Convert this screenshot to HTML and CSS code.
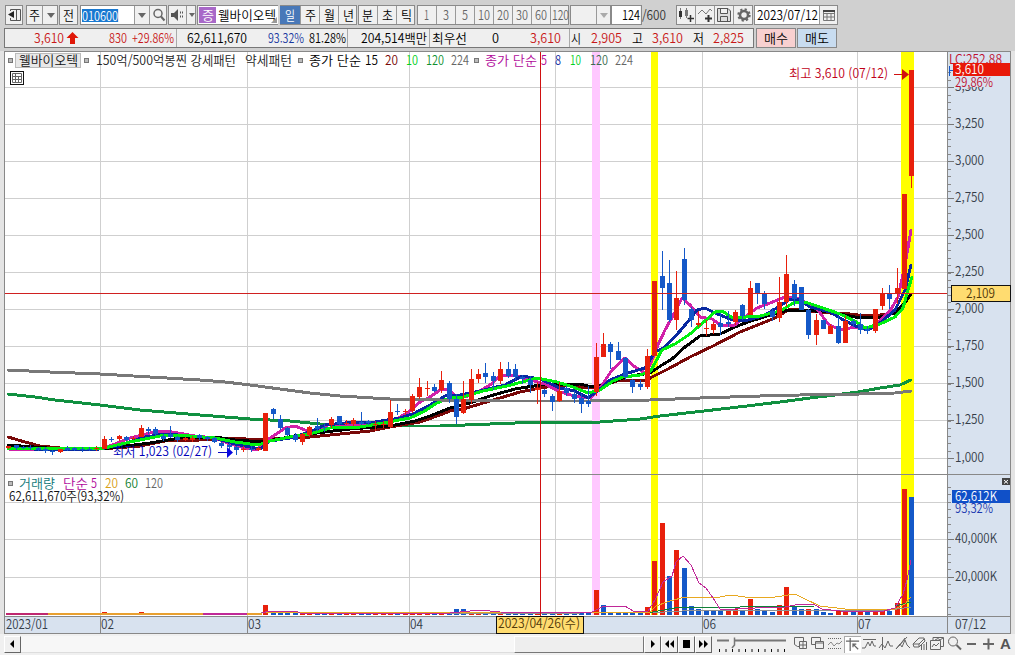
FILE: index.html
```html
<!DOCTYPE html>
<html lang="ko">
<head>
<meta charset="utf-8">
<title>웰바이오텍</title>
<link rel="stylesheet" href="styles.css">
</head>
<body>
<div class="app">
  <div class="toolbar">
    <div class="grp"><span class="btn w18"><svg width="16" height="16"><path d="M4.500 4V2.500H14.500V13.500H4.500V11M10.500 2.500V13.500" fill="none" stroke="#555"/><path d="M2 7.500L8 4V11Z" fill="#222"/></svg></span></div>
    <div class="grp g3"><span class="btn w16"><b class="fit" data-w="11">주</b></span><span class="btn w16"><i class="dn"></i></span></div>
    <div class="grp g1"><span class="btn w19"><b class="fit" data-w="11">전</b></span></div>
    <div class="grp g2"><span class="btn code"><b class="fit sel" data-w="36">010600</b></span><span class="btn w15"><i class="dn"></i></span><span class="btn w18"><svg width="14" height="14"><circle cx="6" cy="5.500" r="4" fill="none" stroke="#666" stroke-width="1.500"/><path d="M9 8.500L12.500 12.500" stroke="#666" stroke-width="2"/></svg></span></div>
    <div class="grp g1"><span class="btn w18"><svg width="15" height="14"><path d="M1 5H4L8 1V13L4 9H1Z" fill="#555"/><path d="M10 4.500H14M10 8.500H14" stroke="#555" stroke-dasharray="1 1" stroke-width="2"/></svg></span><span class="btn w10"><i class="dn small"></i></span></div>
    <div class="grp g1"><span class="btn name"><em><b class="fit" data-w="12">증</b></em><b class="fit" data-w="58">웰바이오텍</b><i class="corner"></i></span></div>
    <div class="grp g2"><span class="btn w20 on"><b class="fit" data-w="10">일</b></span><span class="btn w19"><b class="fit" data-w="11">주</b></span><span class="btn w19"><b class="fit" data-w="11">월</b></span><span class="btn w19"><b class="fit" data-w="11">년</b></span></div>
    <div class="grp g1"><span class="btn w19"><b class="fit" data-w="11">분</b></span><span class="btn w19"><b class="fit" data-w="11">초</b></span><span class="btn w19"><b class="fit" data-w="11">틱</b></span></div>
    <div class="grp g2 off"><span class="btn w19"><b class="fit" data-w="5">1</b></span><span class="btn w19"><b class="fit" data-w="6">3</b></span><span class="btn w19"><b class="fit" data-w="6">5</b></span><span class="btn w19"><b class="fit" data-w="12">10</b></span><span class="btn w19"><b class="fit" data-w="12">20</b></span><span class="btn w19"><b class="fit" data-w="12">30</b></span><span class="btn w19"><b class="fit" data-w="12">60</b></span><span class="btn w19"><b class="fit" data-w="17">120</b></span></div>
    <div class="grp g1 off"><span class="btn w26"></span><span class="btn w15"><i class="dn"></i></span></div>
    <div class="grp"><span class="btn count"><b class="fit" data-w="18">124</b></span></div>
    <span class="total"><b class="fit" data-w="24">/600</b></span>
    <div class="grp g11">
      <span class="btn w19"><svg width="17" height="16"><path d="M3.500 1V12M9.500 1V11" stroke="#777"/><path d="M2 4H5V10H2Z" fill="#333"/><path d="M8 3H11V9H8Z" fill="#777"/><path d="M13.500 8V15M10.500 11.500H17" stroke="#333" stroke-width="1.500"/></svg></span>
      <span class="btn w19"><svg width="17" height="16"><path d="M1 7L5 3L9 7L13 2L15 4" fill="none" stroke="#777"/><path d="M11.500 8V15M8 11.500H15" stroke="#333" stroke-width="2"/></svg></span>
      <span class="btn w19"><svg width="16" height="16"><path d="M1.500 1.500H12L14.500 4V14.500H1.500ZM4.500 1.500V6.500H11.500V1.500M4.500 14.500V9.500H11.500V14.500" fill="#ddd" stroke="#555"/></svg></span>
      <span class="btn w20"><svg width="16" height="16"><circle cx="8" cy="8" r="4" fill="none" stroke="#666" stroke-width="2.500"/><circle cx="8" cy="8" r="5.700" fill="none" stroke="#666" stroke-width="2" stroke-dasharray="2.200 2.270"/></svg></span>
    </div>
    <div class="grp g1"><span class="btn date"><b class="fit" data-w="61">2023/07/12</b></span><span class="btn w19"><svg width="14" height="14"><path d="M1.500 2.500H12.500V12.500H1.500ZM1.500 5.500H12.500M1.500 9H12.500M5 5.500V12.500M9 5.500V12.500" fill="none" stroke="#777"/><path d="M1 3H13" stroke="#444" stroke-width="2"/></svg></span></div>
  </div>

  <div class="quote">
    <div class="info">
      <div class="cell c1"><span class="fit up" data-w="30">3,610</span><svg width="13" height="14"><path d="M6.500 1L12.500 7H9V13H4V7H.5Z" fill="#e01808"/></svg><span class="fit up" data-w="18">830</span><span class="fit up" data-w="42">+29.86%</span></div>
      <div class="cell c2"><span class="fit" data-w="60">62,611,670</span><span class="fit down" data-w="36">93.32%</span><span class="fit" data-w="37">81.28%</span></div>
      <div class="cell c3"><span class="fit" data-w="66">204,514백만</span></div>
      <div class="cell c4"><span class="fit" data-w="35">최우선</span><span class="fit" data-w="7">0</span><span class="fit up" data-w="31">3,610</span></div>
      <div class="cell c5"><span class="fit" data-w="10">시</span><span class="fit up" data-w="31">2,905</span><span class="fit" data-w="11">고</span><span class="fit up" data-w="31">3,610</span><span class="fit" data-w="11">저</span><span class="fit up" data-w="31">2,825</span></div>
    </div>
    <div class="order buy"><b class="fit" data-w="24">매수</b></div>
    <div class="order sell"><b class="fit" data-w="24">매도</b></div>
  </div>

  <svg id="chart" class="chart" width="1015" height="583" viewBox="0 51 1015 583"></svg>

  <div class="bottom">
    <span class="sb"><svg width="15" height="15"><path d="M9 3V11L5 7Z"/></svg></span>
    <span class="track"></span>
    <span class="thumb"></span>
    <span class="sb"><svg width="15" height="15"><path d="M6 3V11L10 7Z"/></svg></span>
    <span class="sb"><svg width="15" height="15"><path d="M7 3V11L3 7ZM12 3V11L8 7Z"/></svg></span>
    <span class="sb"><svg width="15" height="15"><path d="M4 3H11V11H4Z"/></svg></span>
    <span class="sb"><svg width="15" height="15"><path d="M3 3V11L7 7ZM8 3V11L12 7Z"/></svg></span>
    <svg class="slider" width="70" height="19"><path d="M0 4.500H12M18 4.500H69" stroke="#777" stroke-width="2"/><path d="M17.500 1.500V9L15 12" fill="none" stroke="#777" stroke-width="1.500"/><path d="M2.500 13V16M9 13V16M15.500 13V16M22 13V16M28.500 13V16M35 13V16M41.500 13V16M48 13V16M54.500 13V16M61 13V16M67.500 13V16" stroke="#111"/></svg>
    <div class="tools">
      <svg viewBox="0 0 17 17"><path d="M6 10.500H4.500L1.500 8.500V1.500H10.500V5M6.500 5.500H13.500V12.500H6.500ZM10 6V12M7 9H13"/></svg>
      <svg viewBox="0 0 17 17"><path d="M5 8.500H1.500V1.500H10.500V5M5.500 5.500H13.500V12.500H5.500ZM5.500 7H13.500"/></svg>
      <svg viewBox="0 0 17 17"><path d="M1 2.500H15M1 12.500H15" stroke-dasharray="1 1"/><path d="M1 9L4 6L7 10L10 7L12 8L15 5" stroke="#888"/></svg>
      <svg class="act" viewBox="0 0 17 17"><path d="M1 4.500H15M5.500 1V15M8 7L14 13M8.500 11V7.500H12" stroke-width="1.300"/></svg>
      <svg viewBox="0 0 17 17"><path d="M2 3.500H15M1 12L4 12L7 6L9 10L11 5L13 10L15 10"/></svg>
      <svg viewBox="0 0 17 17"><path d="M4.500 1V14M1 12L4 8L7 12L10 5L12 10H15"/></svg>
      <svg viewBox="0 0 17 17"><path d="M1 13L12 1M1 13L5 8L7 11L10 4L12 9L15 12M4 10L10 2"/></svg>
      <svg viewBox="0 0 17 17"><path d="M1 8L7 2L12 2L13 5L7 11L2 11ZM1 8H7L12 3M7 8V11M9.500 8V14M12 8V14M14.500 6V14"/></svg>
      <svg viewBox="0 0 17 17"><path d="M4 4V1.500H14.500V10.500H12M1.500 4.500H11.500V13.500H1.500ZM3 11L5 8L7 10L10 7M6 4L9 2.500L11 4L14 2"/></svg>
      <svg viewBox="0 0 17 17"><circle cx="7" cy="5.500" r="4.500"/><path d="M10.500 9L15 13.500" stroke-width="2"/></svg>
      <svg viewBox="0 0 17 17"><path d="M4 8H13" stroke-width="2"/></svg>
      <svg viewBox="0 0 17 17"><path d="M3 8H14M8.500 2.500V13.500" stroke-width="2"/></svg>
      <span class="a">A</span>
    </div>
  </div>
</div>
<script src="chart.js"></script>
</body>
</html>
```
FILE: styles.css
```css
* { box-sizing: border-box; }
body { margin: 0; width: 1015px; height: 655px; overflow: hidden; background: #d0d0d0; font: 400 13px/16px "Noto Sans CJK KR", "Noto Sans", sans-serif; color: #000; }
b, em, i { font-weight: inherit; font-style: normal; }
svg { display: block; flex: none; }
.app { display: flex; flex-direction: column; }
.fit { display: inline-block; white-space: nowrap; transform-origin: 0 50%; flex: none; }

.toolbar { display: flex; height: 28px; padding: 5px 0 0 5px; font-weight: 350; }
.grp { display: flex; height: 20px; border: 1px solid #8a8a8a; background: #f0f0f0; }
.g1 { margin-left: 1px; }
.g2 { margin-left: 2px; }
.g3 { margin-left: 3px; }
.g11 { margin-left: 10px; }
.btn { display: flex; align-items: center; justify-content: center; height: 18px; overflow: hidden; position: relative; }
.btn + .btn { border-left: 1px solid #999; }
.grp .btn:first-child { margin-left: -1px; }
.grp .btn:last-child { margin-right: -1px; }
.w10 { width: 10px; }
.w15 { width: 15px; }
.w16 { width: 16px; }
.w18 { width: 18px; }
.w19 { width: 19px; }
.w20 { width: 20px; }
.w26 { width: 26px; }
.grp .code { width: 54px; background: #fff; background-clip: content-box; justify-content: flex-start; padding-left: 1px; }
.sel { margin-left: 1px; background: #1878d0; color: #fff; line-height: 13px; }
.grp .name { width: 81px; margin: 0 -1px; padding-left: 2px; background: #fff; background-clip: content-box; justify-content: flex-start; }
.name em { display: flex; justify-content: center; align-items: center; width: 17px; height: 16px; margin-right: 2px; background: #a868c8; color: #fff; }
.corner { position: absolute; right: 1px; bottom: 1px; border: 3px solid #999; border-left-color: transparent; border-top-color: transparent; }
.on { background: #4878b8; color: #fff; }
.off { color: #666; }
.off .dn { border-top-color: #aaa; }
.dn { border: 4px solid transparent; border-top: 5px solid #666; border-bottom: 0; }
.small { border-width: 3px; border-top-width: 4px; }
.grp .count { width: 31px; background: #fff; background-clip: content-box; justify-content: flex-end; padding: 0 2px 0 1px; }
.total { width: 24px; height: 20px; display: flex; align-items: center; color: #333; }
.grp .date { width: 65px; background: #fff; background-clip: content-box; padding-left: 1px; }

.quote { display: flex; height: 23px; padding-left: 4px; }
.info { display: flex; width: 750px; height: 20px; border: 1px solid #777; background: #efefef; font-weight: 350; }
.cell { display: grid; align-items: center; justify-items: start; height: 18px; }
.cell + .cell { border-left: 1px solid #aaa; }
.c1 { width: 171px; padding-left: 29px; grid-template-columns: 32px 43px 23px 45px; }
.c2 { width: 171px; padding-left: 10px; grid-template-columns: 81px 41px 38px; }
.c3 { width: 82px; padding-left: 13px; }
.c4 { width: 140px; padding-left: 2px; grid-template-columns: 60px 38px 38px; }
.c5 { width: 184px; padding-left: 1px; grid-template-columns: 20px 41px 20px 41px 20px 31px; }
.up { color: #c81818; }
.down { color: #1838a0; }
.order { display: flex; align-items: center; justify-content: center; width: 40px; height: 20px; border: 1px solid #888; font-weight: 350; }
.buy { margin-left: 2px; background: #f8d0d0; }
.sell { margin-left: 1px; background: #c8dcf0; }

.chart text { font-family: "Noto Sans CJK KR", "Noto Sans", sans-serif; font-weight: 350; }

.bottom { display: flex; height: 21px; padding: 2px 0 0 4px; background: #f0f0f0; }
.sb { width: 17px; height: 17px; flex: none; border: 1px solid #fff; border-right-color: #666; border-bottom-color: #666; background: #f0f0f0; }
.track { width: 493px; height: 17px; background: #f7f7f7; border-bottom: 1px solid #ddd; }
.thumb { width: 130px; height: 17px; border: 1px solid #fff; border-right-color: #777; border-bottom-color: #777; background: #eee; }
.slider { margin-left: 5px; }
.tools { display: flex; margin-left: 6px; }
.tools svg { width: 17px; height: 17px; fill: none; stroke: #666; }
.act { background: #fff; border-left: 1px solid #aaa; border-top: 1px solid #aaa; }
.a { width: 17px; text-align: center; color: #555; font: bold 15px/16px "Liberation Sans", sans-serif; }
```
FILE: chart.js
```js
document.querySelectorAll('.fit').forEach(function (el) {
  var n = el.getBoundingClientRect().width, w = +el.dataset.w;
  el.style.transform = 'scaleX(' + w / n + ')';
  el.style.marginRight = (w - n) + 'px';
});

var out = [];
function rect(x, y, w, h, c) {
  out.push('<rect x="' + x + '" y="' + y + '" width="' + w + '" height="' + h + '" fill="' + c + '" shape-rendering="crispEdges"/>');
}
function text(x, mid, s, w, c) {
  out.push('<text x="' + x + '" y="' + (mid + 4.75) + '" font-size="13" fill="' + c + '" textLength="' + w + '" lengthAdjust="spacingAndGlyphs">' + s + '</text>');
}
function line(points, c, w) {
  out.push('<polyline points="' + points + '" fill="none" stroke="' + c + '" stroke-width="' + w + '" stroke-linejoin="round" stroke-linecap="round" shape-rendering="crispEdges"/>');
}
function xOf(i) { return Math.floor(8.9 + 7.34 * i); }

var RED = '#e8200c', BLUE = '#1458c8', GRID = '#cfcfcf', AXIS = '#343c48', i;

// panes
rect(0, 51, 1015, 583, '#e4e4e4');
rect(4, 51, 1007, 583, '#888');
rect(5, 52, 942, 564, '#fff');
rect(948, 52, 62, 581, '#d8e2ef');
rect(5, 617, 942, 16, '#d8e2ef');

// grid
[87, 124, 161, 198, 235, 272, 309, 346, 383, 420, 458, 502, 539, 577].forEach(function (y) { rect(5, y, 942, 1, GRID); });
[100, 247, 409, 555, 702, 857].forEach(function (x) { rect(x, 52, 1, 564, GRID); rect(x, 617, 1, 16, '#888'); });
rect(592, 52, 8, 563, '#ffc8ff');
rect(651, 52, 7, 563, '#ffff00');
rect(901, 52, 13, 563, '#ffff00');
rect(4, 474, 1007, 1, '#888');
rect(948, 616, 62, 1, '#888');

// moving averages
line('8,394 35,397 55,400 100,405 140,410 200,415 250,419 290,421 330,425 400,426 440,426 490,424 540,422 600,422 640,419 660,416 730,408 780,402 810,398 835,395 858,392 880,388 900,385 911,380', '#109040', 3);
line('8,437 25,442 40,446 60,448 100,449 140,446 165,441 200,440 230,438 262,440 285,438 310,437 340,434 370,431 390,427 420,422 440,415 450,411 463,409 490,401 520,392 540,388 560,385 590,388 605,385 620,380 645,381 652,377 668,369 690,357 713,346 740,332 775,318 790,309 810,311 830,313 850,314 865,316 880,315 892,313 900,309 911,294', '#780808', 3);
line('8,445 60,449 110,448 150,443 180,438 215,437 235,440 262,442 300,435 350,429 390,426 415,421 430,416 450,408 470,403 490,396 515,389 540,385 580,384 592,387 610,383 625,377 650,373 662,365 672,359 685,347 700,336 720,334 735,327 748,322 770,315 785,311 800,310 830,312 855,317 880,317 895,313 905,303 911,294', '#000', 3);
line('8,449 50,450 100,449 115,444 130,438 150,433 165,431 178,433 195,436 215,438 230,444 245,448 257,450 265,441 275,435 285,428 295,426 305,430 315,432 330,424 360,424 390,422 400,417 410,411 420,402 430,397 440,390 447,389 455,395 465,397 478,392 490,385 500,376 510,375 520,377 530,380 545,384 560,392 575,396 590,398 600,388 612,370 625,358 635,367 645,373 650,365 658,345 665,330 675,312 682,298 690,305 700,317 712,319 722,326 735,325 745,317 757,308 770,303 785,297 795,297 805,302 818,310 828,324 840,330 855,327 868,330 880,321 890,311 898,297 905,265 911,230', '#d020a8', 3);
line('8,448 60,450 100,449 120,445 145,437 165,434 190,436 215,438 235,444 250,447 260,449 270,441 290,438 310,432 325,425 345,423 375,422 400,418 415,413 430,405 445,396 460,395 480,391 505,385 522,376 540,379 560,388 575,391 588,398 600,389 610,380 625,374 645,368 655,352 665,347 680,331 690,319 697,310 705,308 715,313 730,319 745,321 765,315 780,306 790,299 800,300 810,307 830,312 845,321 858,327 868,330 880,323 895,310 905,290 911,265', '#0828a0', 3);
line('8,449 40,448 100,449 130,442 150,438 165,435 190,436 215,438 235,442 258,445 270,441 290,437 310,434 330,428 360,427 383,423 410,418 423,412 437,403 450,398 463,397 483,391 507,386 537,378 557,382 573,387 588,393 600,390 613,381 623,377 640,375 650,372 655,363 662,350 675,344 690,334 705,321 715,312 722,311 733,318 760,316 780,311 795,302 808,303 820,307 840,314 855,321 865,328 880,324 895,317 903,308 908,290 912,277', '#00f010', 3);
line('8,370 50,372 100,374 150,377 200,380 225,382 250,385 310,393 340,396 390,399 440,400 500,401 590,401 650,400 700,398 760,396 800,395 860,394 895,393 911,391', '#787878', 3);

// candles: up/down, high, body top, body bottom, low
var candles = [
  'r 446 446 448 449', 'b 445 445 448 450', 'b 446 447 448 449', 'b 445 447 448 450', 'b 447 448 450 451', 'b 447 449 451 453', 'b 450 451 452 455', 'r 449 449 452 453',
  'b 446 448 450 451', 'b 447 448 450 451', 'b 447 449 450 452', 'b 447 449 450 451', 'r 446 448 449 451', 'r 436 439 449 449', 'b 437 439 440 442', 'r 435 436 439 441', 'b 436 437 440 441', 'r 436 438 439 440',
  'r 425 428 437 437', 'b 427 429 431 434', 'b 427 429 434 436', 'b 434 436 439 441', 'b 426 434 437 438', 'b 436 437 440 442', 'r 437 438 440 441', 'r 436 438 440 442', 'b 434 435 438 440', 'b 436 437 439 441', 'b 437 438 442 443', 'b 442 443 446 448', 'b 443 445 447 450', 'b 446 447 450 455',
  'r 446 449 450 452', 'b 446 449 450 452', 'r 447 448 450 451', 'r 413 413 451 451', 'b 408 409 414 419', 'b 415 419 428 430', 'b 427 428 435 436', 'b 433 435 440 442', 'r 433 434 442 445', 'r 426 427 435 437', 'b 418 426 429 431', 'b 424 427 428 432', 'r 417 419 425 428', 'b 416 416 424 425', 'r 420 423 424 425', 'r 418 420 424 426',
  'b 412 422 424 425', 'b 420 421 423 425', 'r 421 424 425 431', 'r 421 424 425 428', 'r 400 412 427 428', 'b 404 411 412 415', 'r 409 411 412 415', 'r 394 396 411 413', 'r 378 387 397 399', 'r 381 388 389 396', 'b 384 387 391 392', 'r 371 380 390 393', 'b 381 383 399 403', 'b 394 399 417 424', 'r 381 399 413 414',
  'r 369 379 400 404', 'r 369 374 379 383', 'b 363 373 377 383', 'b 372 376 381 390', 'r 362 369 381 384', 'b 362 369 376 378', 'b 364 369 377 380', 'b 375 377 379 384', 'b 376 380 385 393', 'r 382 388 390 404', 'b 389 390 394 397', 'b 394 396 402 411', 'r 382 391 401 402', 'b 386 388 393 396', 'b 391 394 399 403', 'b 394 398 404 413', 'b 386 401 404 407',
  'r 343 357 392 396', 'r 333 344 357 357', 'b 342 344 352 369', 'b 342 351 360 360', 'b 357 358 377 380', 'b 379 380 387 393', 'b 380 384 387 390', 'r 349 356 387 389', 'r 281 281 356 356', 'b 251 276 288 310', 'b 260 283 320 322', 'r 271 298 320 330', 'b 248 259 300 305', 'b 307 309 320 327', 'r 311 323 325 327', 'r 320 328 329 336',
  'r 322 324 330 334', 'b 313 323 327 335', 'b 311 322 324 327', 'r 310 312 322 325', 'b 304 305 316 320', 'r 281 288 315 315', 'b 283 283 294 304', 'b 291 294 304 309', 'b 308 311 317 321', 'r 277 302 318 322', 'r 255 274 302 307', 'b 280 284 299 306', 'b 287 287 310 310', 'b 309 310 335 339', 'r 314 320 335 345',
  'b 320 320 329 329', 'r 324 326 334 334', 'b 316 326 343 344', 'r 316 321 343 343', 'b 319 321 324 327', 'b 313 324 330 334', 'b 326 329 331 334', 'r 309 309 331 333', 'r 288 294 306 310', 'b 285 294 299 309', 'r 268 288 294 304', 'r 194 194 289 289', 'r 70 70 176 188'
];
// volume bar tops; every other bar sits just above the baseline
var vol = { 13: 612, 18: 612, 35: 605, 36: 612, 61: 609, 62: 609, 80: 590, 81: 605, 87: 607, 88: 561, 89: 523, 90: 576, 91: 550, 92: 568, 93: 606, 94: 609, 95: 610, 96: 610, 97: 610, 98: 609, 99: 609, 100: 610, 101: 599, 102: 609, 103: 610, 104: 612, 105: 605, 106: 587, 107: 607, 108: 609, 109: 609, 110: 609, 111: 612, 112: 613, 113: 611, 114: 610, 115: 612, 116: 612, 117: 612, 118: 611, 119: 610, 120: 611, 121: 603, 122: 489, 123: 497 };
var volColor = { 62: 'b', 81: 'b', 89: 'r', 94: 'b', 95: 'b', 96: 'b', 98: 'r', 109: 'r', 110: 'b', 112: 'b', 113: 'r', 114: 'r', 115: 'b', 116: 'r', 123: 'b' };
candles.forEach(function (s, k) {
  var p = s.split(' '), c = p[0] === 'r' ? RED : BLUE, x = xOf(k);
  rect(x, +p[1], 1, Math.max(1, p[4] - p[1]), c);
  rect(x - 2, +p[2], 5, Math.max(1, p[3] - p[2]), c);
  var y = vol[k] || 613;
  rect(x - 2, y, 5, 615 - y, (volColor[k] || p[0]) === 'r' ? RED : BLUE);
});

// volume averages
rect(6, 613, 42, 2, '#c02870');
rect(48, 613, 155, 2, '#e8a030');
rect(203, 613, 44, 2, '#c02898');
rect(247, 613, 15, 2, '#e8a030');
line('262,612.500 450,613 580,613 655,612.500 700,610 890,610 911,607', '#909090', 1);
line('450,613 650,612.500 680,607 740,607 815,606 895,606 911,602', '#108038', 1);
line('262,612.500 650,612 656,606 670,601 685,597 720,597 730,595 745,597 775,597 795,594 805,599 820,606 845,609 895,609 905,604 911,597', '#e8a820', 1);
line('262,613 269,611 296,611 300,613 450,613 480,610 500,612 590,613 602,607 625,606 633,611 648,611 655,600 663,582 672,576 676,562 683,556 691,565 699,583 706,588 713,598 720,609 735,609 755,608 785,607 800,604 815,605 822,609 840,611 880,612 895,608 903,594 907,580 911,560', '#c02898', 1);

// crosshair
rect(540, 52, 1, 564, '#d01010');
rect(5, 293, 942, 1, '#d02020');

// legend
function mark(x, y) { rect(x, y, 5, 5, '#777'); rect(x + 1, y + 1, 3, 3, '#bbb'); }
mark(8, 58); mark(84, 58); mark(298, 58); mark(474, 58); mark(8, 481);
rect(15, 53, 66, 15, '#bbb'); rect(16, 54, 64, 13, '#e8e8e8');
text(19, 60, '웰바이오텍', 59, '#111');
text(96, 60, '150억/500억봉찐 강세패턴', 140, '#222');
text(245, 60, '약세패턴', 47, '#222');
[['종가 단순', 309, 52, '#000'], ['15', 365, 13, '#000'], ['20', 385, 13, '#780808'], ['10', 406, 12, '#00d020'], ['120', 426, 18, '#109030'], ['224', 451, 18, '#666'],
 ['종가 단순', 485, 52, '#b0089a'], ['5', 541, 6, '#b0089a'], ['8', 555, 6, '#0828a0'], ['10', 570, 11, '#00d020'], ['120', 590, 18, '#3c6c50'], ['224', 615, 18, '#666']
].forEach(function (a) { text(a[1], 60, a[0], a[2], a[3]); });
rect(10, 71, 14, 14, '#111'); rect(11, 72, 12, 12, '#fff');
out.push('<path d="M12.500 73.500H21.500V82.500H12.500ZM12 76.500H22M12 79.500H22M15.500 73V83M18.500 76V83" fill="none" stroke="#666"/>');
[['거래량', 19, 36, '#107878'], ['단순', 63, 25, '#b0089a'], ['5', 91, 6, '#b0089a'], ['20', 105, 13, '#d8a018'], ['60', 125, 13, '#108030'], ['120', 145, 18, '#666']
].forEach(function (a) { text(a[1], 483, a[0], a[2], a[3]); });
text(9, 496, '62,611,670주(93,32%)', 115, '#111');

// extremes
text(789, 73, '최고 3,610 (07/12)', 99, '#c00018');
out.push('<path d="M894 74.500H904" stroke="#d01010"/><path d="M902 69L909 74.500L902 80Z" fill="#d01010"/>');
text(113, 451, '최저 1,023 (02/27)', 99, '#0000b8');
out.push('<path d="M218 452.500H228" stroke="#0808c0"/><path d="M227 447L233 452.500L227 458Z" fill="#0808e0"/>');

// price axis
for (i = 0; i < 54; i++) rect(948, Math.round(465.5 - i * 7.42), 3, 1, '#888');
[[87, '3,500'], [124, '3,250'], [161, '3,000'], [198, '2,750'], [235, '2,500'], [272, '2,250'], [309, '2,000'], [346, '1,750'], [383, '1,500'], [420, '1,250'], [458, '1,000']].forEach(function (a) {
  rect(948, a[0], 6, 1, '#777');
  text(955, a[0] - 0.5, a[1], 29, AXIS);
});
for (i = 0; i < 18; i++) rect(948, Math.round(614 - i * 7.5), 3, 1, '#888');
[[539, '40,000K'], [577, '20,000K']].forEach(function (a) { rect(948, a[0], 6, 1, '#777'); text(955, a[0] - 0.5, a[1], 42, AXIS); });
text(949, 59, 'LC:252.88', 53, '#c01030');
rect(955, 77, 40, 10, '#d8e2ef');
text(955, 82, '29,86%', 38, '#c01030');
rect(949, 66, 1, 10, BLUE); rect(950, 70, 3, 1, BLUE);
rect(953, 63, 57, 13, '#e81808');
text(955, 69.5, '3,610', 29, '#fff');
rect(951, 285, 60, 17, '#111'); rect(952, 286, 58, 15, '#ffdc70');
text(966, 293, '2,109', 29, '#503808');
rect(1002, 478, 8, 7, '#444');
out.push('<path d="M1004 480L1008 483.500M1008 480L1004 483.500" stroke="#fff"/>');
rect(952, 490, 58, 13, '#1050c8');
text(955, 496.5, '62,612K', 42, '#fff');
text(955, 508, '93,32%', 38, '#1838b0');

// date axis
[['2023/01', 6, 42], ['02', 101, 13], ['03', 248, 13], ['04', 410, 13], ['06', 703, 13], ['07', 858, 13], ['07/12', 955, 31]].forEach(function (a) { text(a[1], 624, a[0], a[2], AXIS); });
rect(496, 616, 88, 18, '#111'); rect(497, 617, 86, 16, '#ffdc70');
text(498, 623.5, '2023/04/26(수)', 82, '#503808');

document.getElementById('chart').innerHTML = out.join('');
```
